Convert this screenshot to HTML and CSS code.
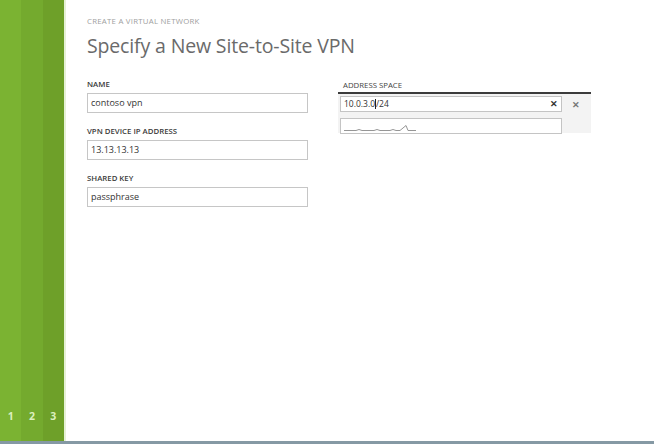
FILE: index.html
```html
<!DOCTYPE html>
<html>
<head>
<meta charset="utf-8">
<link rel="stylesheet" href="styles.css">
</head>
<body>
<div class="app">
  <div class="rail">
    <div class="stripe s1"><span class="num">1</span></div>
    <div class="stripe s2"><span class="num">2</span></div>
    <div class="stripe s3"><span class="num">3</span></div>
  </div>
  <div class="edge"></div>
  <main class="main">
    <div class="kicker">CREATE A VIRTUAL NETWORK</div>
    <h1 class="title">Specify a New Site-to-Site VPN</h1>
    <div class="form">
      <div class="col-left">
        <div class="field">
          <div class="label">NAME</div>
          <div class="input">contoso vpn</div>
        </div>
        <div class="field">
          <div class="label">VPN DEVICE IP ADDRESS</div>
          <div class="input">13.13.13.13</div>
        </div>
        <div class="field">
          <div class="label">SHARED KEY</div>
          <div class="input">passphrase</div>
        </div>
      </div>
      <div class="col-right">
        <div class="label label-addr">ADDRESS SPACE</div>
        <div class="panel">
          <div class="row">
            <div class="ainput"><span>10.0.3.0</span><span class="caret"></span><span>/24</span><span class="clear">&#x2715;</span></div>
            <span class="remove">&#x2715;</span>
          </div>
          <div class="row">
            <div class="ainput">
              <svg class="squiggle" width="72" height="9" viewBox="0 0 72 9"><path d="M0 7.5 L12 7.5 Q15 5.5 18 7.5 L30 7.5 Q33 5.5 36 7.5 L46 7.5 Q49 5.5 52 7.5 L56 7.5 L62 2.5 L64 7.5 L72 7.5" fill="none" stroke="#8a8a8a" stroke-width="0.9"/></svg>
            </div>
          </div>
        </div>
      </div>
    </div>
  </main>
</div>
</body>
</html>
```
FILE: styles.css
```css
* { box-sizing: border-box; }
html, body { margin: 0; padding: 0; }
body {
  width: 654px;
  height: 444px;
  overflow: hidden;
  background: #ffffff;
  font-family: "Open Sans", "Noto Sans", sans-serif;
}
.app {
  display: flex;
  height: 444px;
  border-bottom: 3px solid #8599a4;
}
.rail {
  display: flex;
  width: 64px;
  flex: none;
}
.stripe {
  flex: 1;
  display: flex;
  align-items: flex-end;
  justify-content: center;
  padding-bottom: 20px;
}
.s1 { background: #7bb332; }
.s2 { background: #74aa2e; }
.s3 { background: #6ea029; }
.num {
  color: #dcefbf;
  font-size: 10.5px;
  font-weight: 700;
  line-height: 10px;
}
.edge {
  width: 2px;
  flex: none;
  background: #e6f1d6;
}
.main {
  flex: 1;
  padding: 16px 0 0 21px;
}
.kicker {
  font-size: 7.8px;
  color: #a0a0a0;
  letter-spacing: 0.25px;
  line-height: 10px;
}
.title {
  margin: 7px 0 0 0;
  font-size: 19.5px;
  font-weight: 400;
  color: #6a6a6a;
  line-height: 26px;
  letter-spacing: -0.15px;
}
.form {
  display: flex;
  gap: 30px;
  margin-top: 21px;
}
.col-left {
  width: 221px;
  display: flex;
  flex-direction: column;
  gap: 14px;
}
.field {
  display: flex;
  flex-direction: column;
  gap: 4px;
}
.label {
  font-size: 7.8px;
  line-height: 9px;
  color: #3a3a3a;
  font-weight: 600;
}
.input {
  height: 20px;
  border: 1px solid #c6c6c6;
  padding: 0 3px;
  font-size: 9px;
  line-height: 18px;
  color: #333;
}
.col-right {
  width: 253px;
}
.label-addr {
  padding-left: 5px;
  font-weight: 400;
  color: #444;
  margin-top: 1px;
}
.panel {
  margin-top: 2px;
  border-top: 2px solid #3c3c3c;
  background: #f3f3f3;
  padding: 2px;
  display: flex;
  flex-direction: column;
  gap: 6px;
  height: 41px;
}
.row {
  display: flex;
  align-items: center;
}
.ainput {
  width: 222px;
  height: 16px;
  background: #fff;
  border: 1px solid #c4c4c4;
  padding: 0 3px;
  font-size: 8.5px;
  line-height: 14px;
  color: #333;
  display: flex;
  align-items: center;
}
.caret {
  display: inline-block;
  width: 1px;
  height: 10px;
  background: #222;
}
.clear {
  margin-left: auto;
  font-size: 9px;
  font-weight: 700;
  color: #333;
}
.remove {
  margin-left: 10px;
  font-size: 9px;
  font-weight: 700;
  color: #777;
}
.squiggle {
  display: block;
  margin-top: 3px;
}
```
